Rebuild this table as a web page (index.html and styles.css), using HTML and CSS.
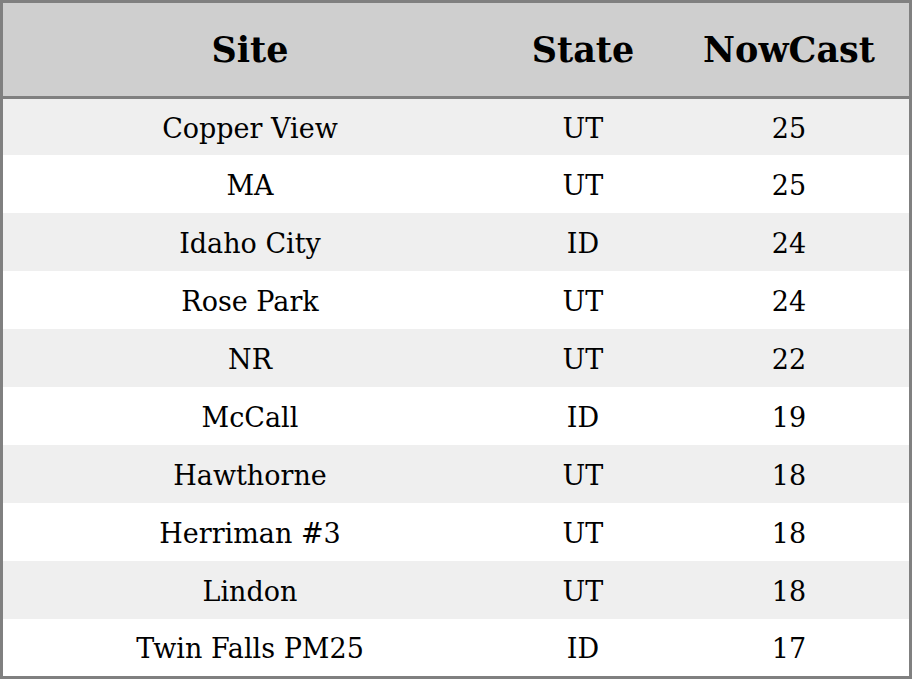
FILE: index.html
```html
<!DOCTYPE html>
<html>
<head>
<meta charset="utf-8">
<link rel="stylesheet" href="styles.css">
</head>
<body>
<table class="aq">
  <colgroup><col class="c-site"><col class="c-state"><col class="c-now"></colgroup>
  <thead>
    <tr><th>Site</th><th>State</th><th>NowCast</th></tr>
  </thead>
  <tbody>
    <tr><td>Copper View</td><td>UT</td><td>25</td></tr>
    <tr><td>MA</td><td>UT</td><td>25</td></tr>
    <tr><td>Idaho City</td><td>ID</td><td>24</td></tr>
    <tr><td>Rose Park</td><td>UT</td><td>24</td></tr>
    <tr><td>NR</td><td>UT</td><td>22</td></tr>
    <tr><td>McCall</td><td>ID</td><td>19</td></tr>
    <tr><td>Hawthorne</td><td>UT</td><td>18</td></tr>
    <tr><td>Herriman #3</td><td>UT</td><td>18</td></tr>
    <tr><td>Lindon</td><td>UT</td><td>18</td></tr>
    <tr><td>Twin Falls PM25</td><td>ID</td><td>17</td></tr>
  </tbody>
</table>
</body>
</html>
```
FILE: styles.css
```css
html, body { margin: 0; padding: 0; background: #fff; }
body { font-family: "DejaVu Serif", serif; color: #000; }
.aq {
  width: 912px;
  border-collapse: separate;
  border-spacing: 0;
  border: 3px solid #808080;
  table-layout: fixed;
}
.c-site { width: 494px; }
.c-state { width: 172px; }
.c-now { width: 240px; }
.aq thead tr { height: 96px; }
.aq th {
  background: #cfcfcf;
  font-weight: bold;
  font-size: 35px;
  padding: 0;
  text-align: center;
  border-bottom: 3px solid #808080;
}
.aq tbody tr { height: 58px; }
.aq tbody tr:first-child { height: 56px; }
.aq tbody tr:last-child { height: 57px; }
.aq td {
  font-size: 27px;
  padding: 2px 0 0;
  text-align: center;
}
.aq tbody tr:nth-child(odd) td { background: #efefef; }
```
